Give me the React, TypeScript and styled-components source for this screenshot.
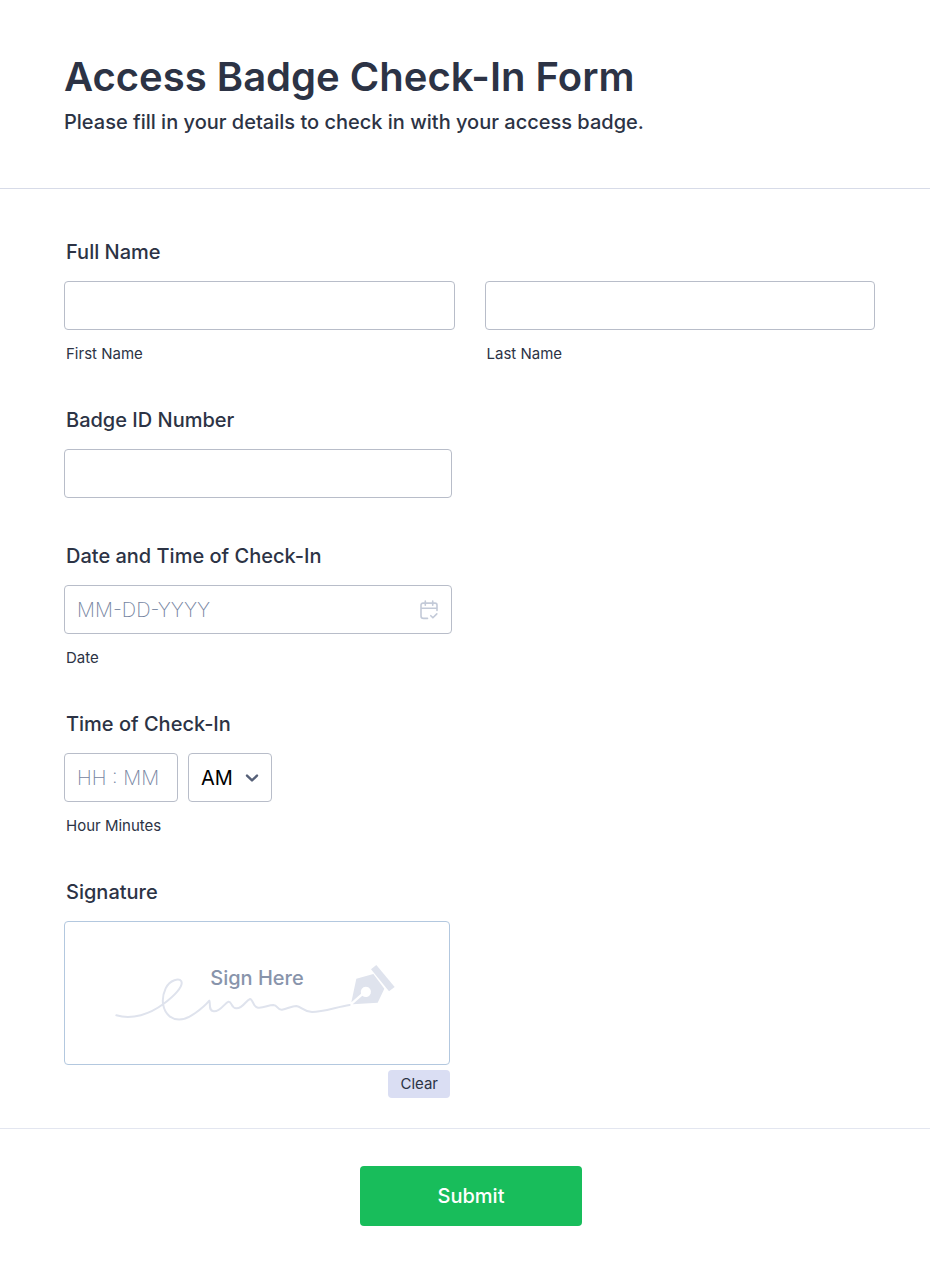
import React from "react";
import styled, { createGlobalStyle } from "styled-components";

const GlobalStyle = createGlobalStyle`
  *, *::before, *::after {
    box-sizing: border-box;
  }
  body {
    margin: 0;
    background: #ffffff;
    color: #2c3345;
    font-family: Inter, "Liberation Sans", sans-serif;
  }
  input, select, button {
    font-family: inherit;
  }
`;

const Form = styled.form`
  display: flex;
  flex-direction: column;
  background: #ffffff;
`;

const Header = styled.header`
  padding: 52px 54px 54px 64px;
  border-bottom: 1px solid #d7dbe8;
`;

const Title = styled.h1`
  margin: 0;
  font-size: 40px;
  line-height: 50px;
  font-weight: 600;
`;

const Subtitle = styled.p`
  margin: 8px 0 0;
  font-size: 20px;
  line-height: 24px;
  font-weight: 500;
`;

const Fields = styled.div`
  display: flex;
  flex-direction: column;
  gap: 46px;
  padding: 51px 55px 30px 64px;
`;

const Field = styled.fieldset`
  min-width: 0;
  margin: 0;
  padding: 0;
  border: 0;
`;

const labelText = `
  display: block;
  margin: 0 0 17px;
  padding: 0 0 0 2px;
  font-size: 20px;
  line-height: 24px;
  font-weight: 500;
`;

const Legend = styled.legend`
  ${labelText}
`;

const Label = styled.label`
  ${labelText}
`;

const SubLabel = styled.label`
  display: block;
  margin-top: 16px;
  padding-left: 2px;
  font-size: 15px;
  line-height: 16px;
`;

const NameGrid = styled.div`
  display: grid;
  grid-template-columns: 1fr 1fr;
  gap: 30px;
`;

const Control = styled.div<{ $width: number }>`
  position: relative;
  width: ${({ $width }) => $width}px;
  max-width: 100%;
`;

const controlBox = `
  display: block;
  width: 100%;
  height: 49px;
  margin: 0;
  padding: 0 12px;
  border: 1px solid #b8bdc9;
  border-radius: 4px;
  background: #ffffff;
  font-size: 20px;
  outline-color: #7a8fd8;
`;

const TextInput = styled.input`
  ${controlBox}
  color: #2c3345;
  &::placeholder {
    color: #75849f;
    font-weight: 200;
    opacity: 1;
  }
`;

const Select = styled.select`
  ${controlBox}
  appearance: none;
  color: #000000;
`;

const ControlIcon = styled.svg<{ $right: number }>`
  position: absolute;
  top: 0;
  bottom: 0;
  right: ${({ $right }) => $right}px;
  margin: auto 0;
  fill: none;
  stroke-linecap: round;
  stroke-linejoin: round;
  pointer-events: none;
`;

const TimeRow = styled.div`
  display: flex;
  gap: 10px;
`;

const Signature = styled.div`
  display: flex;
  flex-direction: column;
  align-items: flex-end;
  gap: 5px;
  width: 386px;
  max-width: 100%;
`;

const Pad = styled.div`
  position: relative;
  display: flex;
  align-items: center;
  justify-content: center;
  width: 100%;
  height: 144px;
  border: 1px solid #b3c8df;
  border-radius: 4px;
`;

const PadText = styled.span`
  position: absolute;
  top: 44px;
  left: 0;
  right: 0;
  text-align: center;
  font-size: 20px;
  line-height: 24px;
  font-weight: 500;
  color: #8894ab;
`;

const ClearButton = styled.button`
  height: 28px;
  padding: 0 12px;
  border: 0;
  border-radius: 4px;
  background: #dadef3;
  color: #2c3345;
  font-size: 15px;
  line-height: 28px;
  cursor: pointer;
`;

const Footer = styled.footer`
  display: flex;
  justify-content: center;
  padding: 37px 54px 50px 66px;
  border-top: 1px solid #e3e6f0;
`;

const SubmitButton = styled.button`
  width: 222px;
  height: 60px;
  border: 0;
  border-radius: 4px;
  background: #18bd5b;
  color: #ffffff;
  font-size: 20px;
  font-weight: 500;
  cursor: pointer;
`;

function CalendarIcon() {
  return (
    <ControlIcon $right={13} width="20" height="20" viewBox="0 0 20 20" stroke="#c3cad8" strokeWidth="1.6" aria-hidden="true">
      <path d="M8.500 18.400H4.500a2.500 2.500 0 0 1-2.500-2.500V5.100a2 2 0 0 1 2-2h12a2 2 0 0 1 2 2V10.500M2 8.200h16M6.300 1v4.200M13.700 1v4.200M11.800 15.700l2.100 2.100 3.900-3.900" />
    </ControlIcon>
  );
}

function ChevronIcon() {
  return (
    <ControlIcon $right={13} width="14" height="10" viewBox="0 0 14 10" stroke="#566078" strokeWidth="2.4" aria-hidden="true">
      <path d="M2 2.600l5 4.800 5-4.800" />
    </ControlIcon>
  );
}

function SignatureArt() {
  return (
    <svg width="286" height="58" viewBox="192 165 858 174" fill="none" aria-hidden="true">
      <path
        d="M199 319C247 333 300 315 340 285C372 262 401 232 394 217C388 207 360 211 347 238C332 270 337 304 360 323C382 338 410 331 436 312C456 298 468 287 478 275C482 286 475 306 491 307C512 309 523 282 536 278C546 278 543 297 559 298C579 299 587 274 600 270C610 271 608 294 624 296C641 298 655 288 670 288C684 289 681 303 696 302C712 300 724 291 739 291C755 293 759 308 786 309C820 309 860 294 899 288"
        stroke="#dfe3ed"
        strokeWidth="6"
        strokeLinecap="round"
        strokeLinejoin="round"
      />
      <g fill="#dfe3ed">
        <path d="M963 181L979 168L1034 234L1017 247Z" />
        <path d="M919 209L970 195L1003 239L983 281L908 286L937 260A15.500 15.500 0 1 0 933 254L904 280Z" />
      </g>
    </svg>
  );
}

export default function App() {
  return (
    <>
      <GlobalStyle />
      <Form onSubmit={(event: React.FormEvent) => event.preventDefault()}>
        <Header>
          <Title>Access Badge Check-In Form</Title>
          <Subtitle>Please fill in your details to check in with your access badge.</Subtitle>
        </Header>

        <Fields>
          <Field>
            <Legend>Full Name</Legend>
            <NameGrid>
              <div>
                <TextInput id="first-name" type="text" />
                <SubLabel htmlFor="first-name">First Name</SubLabel>
              </div>
              <div>
                <TextInput id="last-name" type="text" />
                <SubLabel htmlFor="last-name">Last Name</SubLabel>
              </div>
            </NameGrid>
          </Field>

          <div>
            <Label htmlFor="badge-id">Badge ID Number</Label>
            <Control $width={388}>
              <TextInput id="badge-id" type="text" />
            </Control>
          </div>

          <Field>
            <Legend>Date and Time of Check-In</Legend>
            <Control $width={388}>
              <TextInput id="date" type="text" placeholder="MM-DD-YYYY" />
              <CalendarIcon />
            </Control>
            <SubLabel htmlFor="date">Date</SubLabel>
          </Field>

          <Field>
            <Legend>Time of Check-In</Legend>
            <TimeRow>
              <Control $width={114}>
                <TextInput id="time" type="text" placeholder="HH : MM" />
              </Control>
              <Control $width={84}>
                <Select aria-label="AM/PM" defaultValue="AM">
                  <option>AM</option>
                  <option>PM</option>
                </Select>
                <ChevronIcon />
              </Control>
            </TimeRow>
            <SubLabel htmlFor="time">Hour Minutes</SubLabel>
          </Field>

          <Field>
            <Legend>Signature</Legend>
            <Signature>
              <Pad>
                <SignatureArt />
                <PadText>Sign Here</PadText>
              </Pad>
              <ClearButton type="button">Clear</ClearButton>
            </Signature>
          </Field>
        </Fields>

        <Footer>
          <SubmitButton type="submit">Submit</SubmitButton>
        </Footer>
      </Form>
    </>
  );
}
